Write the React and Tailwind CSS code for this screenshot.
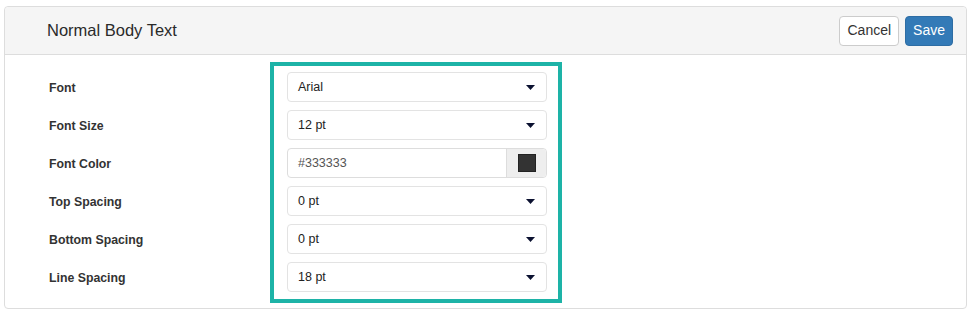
import React from 'react';

const rows = [
  { label: 'Font', value: 'Arial' },
  { label: 'Font Size', value: '12 pt' },
  { label: 'Font Color', value: '#333333', color: true },
  { label: 'Top Spacing', value: '0 pt' },
  { label: 'Bottom Spacing', value: '0 pt' },
  { label: 'Line Spacing', value: '18 pt' },
];

function Caret() {
  return (
    <svg width="9" height="5" viewBox="0 0 9 5" className="text-[#0b1130]">
      <path d="M0 0h9L4.5 5z" fill="currentColor" />
    </svg>
  );
}

function Field({ value, color }) {
  if (color) {
    return (
      <div className="flex h-[30px] rounded border border-[#ddd] bg-white">
        <div className="flex flex-1 items-center pl-[10px] text-[12.5px] text-[#555]">{value}</div>
        <div className="flex w-[40px] items-center justify-center rounded-r border-l border-[#ddd] bg-[#eee]">
          <div className="h-[18px] w-[18px] border border-[#222] bg-[#333]" />
        </div>
      </div>
    );
  }
  return (
    <div className="flex h-[30px] items-center justify-between rounded border border-[#e3e3e3] bg-white pl-[10px] pr-[11px] text-[12.5px] text-[#222]">
      <span>{value}</span>
      <Caret />
    </div>
  );
}

export default function App() {
  return (
    <div className="bg-white pl-[4px] pr-[7px] pt-[6px] pb-[9px]" style={{ fontFamily: '"Liberation Sans", Arial, sans-serif' }}>
      <div className="rounded-[4px] border border-[#ddd] bg-white">
        <div className="flex h-[48px] items-center justify-between rounded-t-[4px] border-b border-[#ddd] bg-[#f5f5f5] pl-[42px] pr-[13px]">
          <h1 className="text-[16.5px] text-[#2a2a2a]">Normal Body Text</h1>
          <div className="flex gap-[6px]">
            <button className="h-[30px] rounded border border-[#ccc] bg-white px-[7px] text-[14px] text-[#333]">Cancel</button>
            <button className="h-[30px] rounded border border-[#2e6da4] bg-[#337ab7] px-[7px] text-[14px] text-white">Save</button>
          </div>
        </div>
        <div className="flex pt-[7px] pb-[5px]">
          <div className="flex w-[265px] flex-col pl-[44px] pt-[7px]">
            {rows.map((r) => (
              <div key={r.label} className="flex h-[38px] items-center text-[12.3px] font-bold text-[#333]">
                {r.label}
              </div>
            ))}
          </div>
          <div className="flex w-[292px] flex-col gap-[8px] border-4 border-[#1db3a7] pl-[13px] pr-[11px] pt-[6px] pb-[7px]">
            {rows.map((r) => (
              <Field key={r.label} value={r.value} color={r.color} />
            ))}
          </div>
        </div>
      </div>
    </div>
  );
}
